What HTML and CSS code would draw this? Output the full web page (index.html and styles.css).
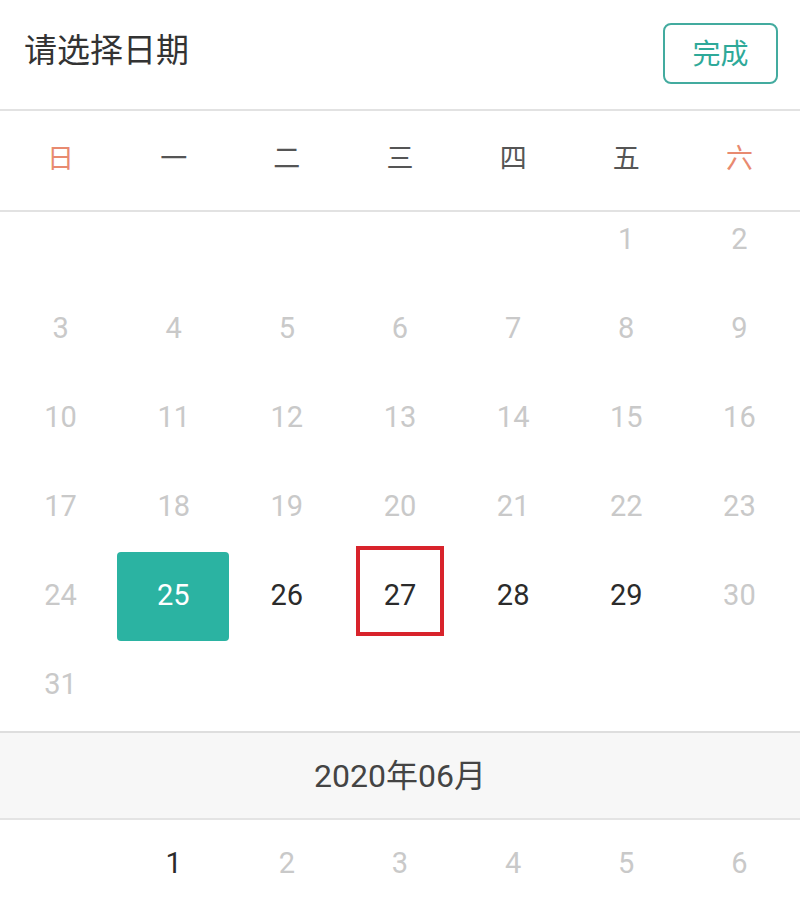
FILE: index.html
```html
<!DOCTYPE html>
<html lang="zh-CN">
<head>
<meta charset="utf-8">
<title>请选择日期</title>
<link rel="stylesheet" href="styles.css">
</head>
<body>
<div class="picker">
  <header class="bar">
    <h1 class="title">请选择日期</h1>
    <button class="done">完成</button>
  </header>
  <div class="weekdays">
    <span class="wk weekend">日</span>
    <span class="wk">一</span>
    <span class="wk">二</span>
    <span class="wk">三</span>
    <span class="wk">四</span>
    <span class="wk">五</span>
    <span class="wk weekend">六</span>
  </div>
  <div class="scroll">
    <div class="scroll-inner">
      <div class="days">
        <span class="d"></span><span class="d"></span><span class="d"></span><span class="d"></span><span class="d"></span>
        <span class="d off">1</span><span class="d off">2</span>
        <span class="d off">3</span><span class="d off">4</span><span class="d off">5</span><span class="d off">6</span><span class="d off">7</span><span class="d off">8</span><span class="d off">9</span>
        <span class="d off">10</span><span class="d off">11</span><span class="d off">12</span><span class="d off">13</span><span class="d off">14</span><span class="d off">15</span><span class="d off">16</span>
        <span class="d off">17</span><span class="d off">18</span><span class="d off">19</span><span class="d off">20</span><span class="d off">21</span><span class="d off">22</span><span class="d off">23</span>
        <span class="d off">24</span><span class="d selected">25</span><span class="d">26</span><span class="d marked">27</span><span class="d">28</span><span class="d">29</span><span class="d off">30</span>
        <span class="d off">31</span>
      </div>
      <div class="month">2020年06月</div>
      <div class="days">
        <span class="d"></span>
        <span class="d">1</span><span class="d off">2</span><span class="d off">3</span><span class="d off">4</span><span class="d off">5</span><span class="d off">6</span>
      </div>
    </div>
  </div>
</div>
</body>
</html>
```

FILE: styles.css
```css
* { box-sizing: border-box; }
html, body { margin: 0; padding: 0; background: #fff; }
body {
  width: 800px;
  height: 918px;
  overflow: hidden;
  font-family: "Roboto", "Noto Sans CJK SC", sans-serif;
  color: #333;
}
.picker { display: flex; flex-direction: column; height: 918px; }
.bar {
  height: 111px;
  display: flex;
  align-items: flex-start;
  justify-content: space-between;
  padding: 23px 22px 0 24px;
  border-bottom: 2px solid #e2e2e2;
}
.title {
  margin: -3px 0 0;
  font-family: "Noto Sans CJK SC", sans-serif;
  font-weight: 400;
  font-size: 33px;
  line-height: 56px;
  color: #333;
}
.done {
  width: 115px;
  height: 61px;
  background: #fff;
  border: 2px solid #43ab9f;
  border-radius: 8px;
  font-family: "Noto Sans CJK SC", sans-serif;
  font-size: 28px;
  color: #2ea999;
  padding: 0 0 4px;
  line-height: 1;
}
.weekdays {
  height: 101px;
  display: grid;
  grid-template-columns: repeat(7, 1fr);
  align-items: center;
  padding: 0 4px 8px;
  border-bottom: 2px solid #e2e2e2;
}
.wk {
  text-align: center;
  font-family: "Noto Sans CJK SC", sans-serif;
  font-size: 27px;
  color: #555;
}
.wk.weekend { color: #e88a70; }
.scroll { flex: 1; overflow: hidden; }
.scroll-inner { margin-top: -16px; }
.days {
  display: grid;
  grid-template-columns: repeat(7, 1fr);
  grid-auto-rows: 89px;
  padding: 0 4px;
}
.d {
  position: relative;
  display: flex;
  align-items: center;
  justify-content: center;
  padding-bottom: 4px;
  font-size: 29px;
  color: #2b2b2b;
}
.d.off { color: #c9c9c9; }
.d.selected {
  background: #2bb3a2;
  color: #fff;
  border-radius: 4px;
  margin-right: 1px;
  margin-bottom: 0;
}
.d.marked::after {
  content: "";
  position: absolute;
  left: 13px;
  right: 13px;
  top: -6px;
  bottom: 5px;
  border: 4px solid #d8232b;
}
.month {
  height: 89px;
  display: flex;
  align-items: center;
  justify-content: center;
  padding-bottom: 6px;
  background: #f7f7f7;
  border-top: 2px solid #dedede;
  border-bottom: 2px solid #e4e4e4;
  font-size: 32px;
  color: #444;
  margin-top: 1px;
}
```
